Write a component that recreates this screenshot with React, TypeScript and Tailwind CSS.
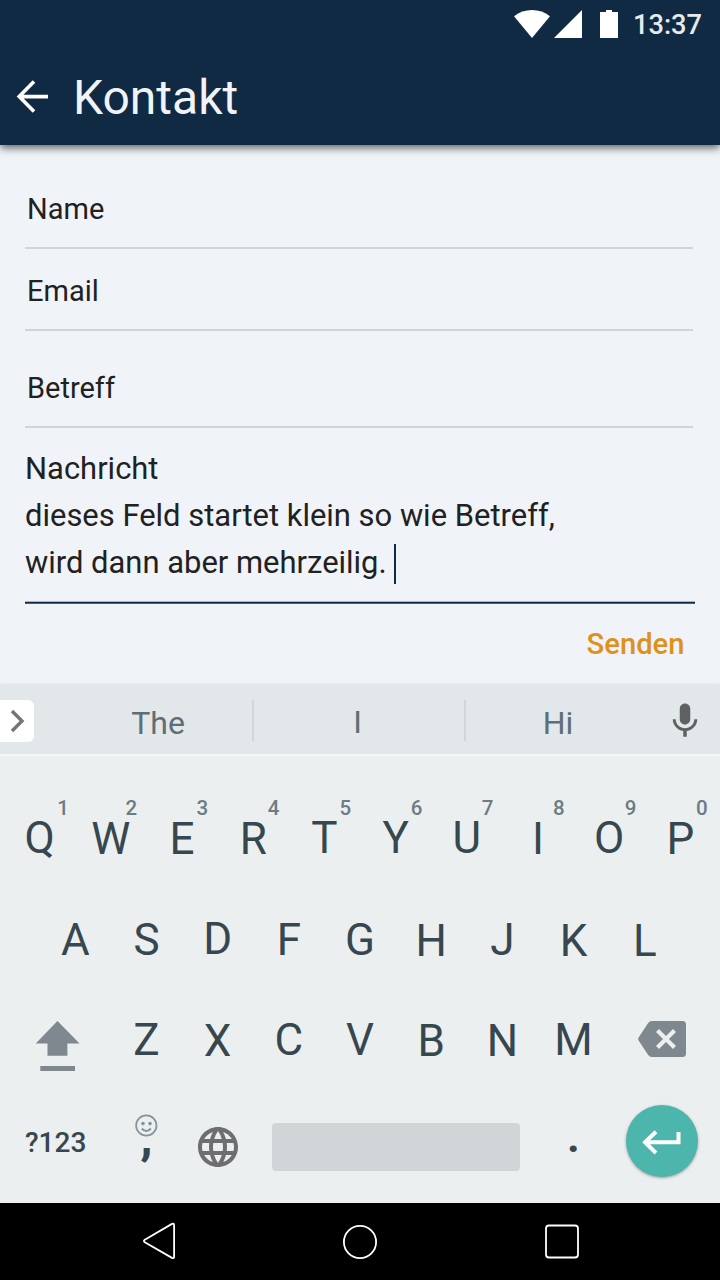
import React from "react";

type Key = { label: string; hint?: string; shift?: string; hintPlace?: string };

const row1: Key[] = [
  { label: "Q", hint: "1", shift: "pb-[2px]", hintPlace: "left-[47px]" },
  { label: "W", hint: "2", hintPlace: "left-[44px]" },
  { label: "E", hint: "3", hintPlace: "left-[44px]" },
  { label: "R", hint: "4", hintPlace: "left-[44px]" },
  { label: "T", hint: "5", shift: "pb-[2px]" },
  { label: "Y", hint: "6", shift: "pb-[2px]" },
  { label: "U", hint: "7", shift: "pb-[2px]" },
  { label: "I", hint: "8" },
  { label: "O", hint: "9", shift: "pb-[2px]", hintPlace: "left-[45px]" },
  { label: "P", hint: "0", hintPlace: "left-[45px]" },
];

const row2: Key[] = [
  { label: "A" },
  { label: "S" },
  { label: "D", shift: "pb-[2px]" },
  { label: "F" },
  { label: "G" },
  { label: "H", shift: "pt-[2px]" },
  { label: "J" },
  { label: "K", shift: "pt-[2px]" },
  { label: "L", shift: "pt-[2px]" },
];

const row3: Key[] = [
  { label: "Z" },
  { label: "X", shift: "pt-[2px]" },
  { label: "C" },
  { label: "V" },
  { label: "B", shift: "pt-[2px]" },
  { label: "N", shift: "pt-[2px]" },
  { label: "M" },
];

function KeyCap({ label, hint, shift = "", hintPlace = "left-[44.5px]" }: Key) {
  return (
    <div className="relative flex h-full w-[71.2px] items-center justify-center">
      <span className={`text-[44px] leading-[44px] ${shift}`}>{label}</span>
      {hint && (
        <span
          className={`absolute top-[11px] w-6 text-center text-[20.5px] font-medium leading-[18px] text-[#6b7c84] ${hintPlace}`}
        >
          {hint}
        </span>
      )}
    </div>
  );
}

function StatusBar() {
  return (
    <div className="flex h-[48px] items-start justify-end pr-[18px]">
      <svg className="mt-2 h-8 w-[106px]" viewBox="512 8 106 32" fill="#fff">
        <path d="M532 38 514 16.2Q522 10 532 10T550 16.2Z" />
        <path d="M554 38 582 10V38Z" />
        <path d="M600 12H606V10H612V12H618V38H600Z" />
      </svg>
      <span className="ml-[15px] mt-[9px] text-[27.2px] font-medium leading-8 text-[#e7eaec]">13:37</span>
    </div>
  );
}

function AppBar() {
  return (
    <div className="flex h-[97px] items-center">
      <svg className="-mt-px ml-4 h-9 w-9" viewBox="16 78 36 36" fill="none" stroke="#fff" strokeWidth="3.6">
        <path d="M34 81.6 19.200 96.600 34 111.600M19.200 96.600H48" />
      </svg>
      <h1 className="ml-[21px] mt-[2px] text-[48px] leading-[56px] text-[#f0f4f8]">Kontakt</h1>
    </div>
  );
}

function Field({ label, className }: { label: string; className: string }) {
  return (
    <div className={`h-[60px] w-[668px] border-b-2 border-[#d0d5db] pl-0.5 text-[29px] leading-10 ${className}`}>
      {label}
    </div>
  );
}

function ContactForm() {
  return (
    <main className="h-[540px] pl-[25px] pt-[44px] text-[#212121]">
      <Field label="Name" className="" />
      <Field label="Email" className="mt-[22px]" />
      <Field label="Betreff" className="mt-[37px]" />
      <div className="mt-[17px] h-[156px] whitespace-nowrap text-[30.95px] leading-[47px]">
        <div>Nachricht</div>
        <div>dieses Feld startet klein so wie Betreff,</div>
        <div className="flex">
          wird dann aber mehrzeilig.
          <span className="ml-[7.5px] mt-[5px] h-10 w-0.5 bg-[#102a43]" />
        </div>
      </div>
      <div className="-ml-[0.5px] h-[3px] w-[670px] border-y border-b-[#4a5f74] border-t-[#a9b5c1] bg-[#102a43]" />
      <div className="flex h-20 justify-end pr-[35.5px] pt-5">
        <button className="h-10 text-[29.2px] font-medium leading-10 text-[#de911d]">Senden</button>
      </div>
    </main>
  );
}

function Suggestions() {
  return (
    <div className="flex h-[71px] items-start border-b-2 border-[#f4f6f7] bg-[#e2e7ea] pt-[15px] text-[32px] leading-[46px] text-[#5f6e76] shadow-[0_-1px_2px_rgba(0,0,0,0.08)]">
      <div className="flex h-[42px] w-[34px] items-center rounded-r-[6px] bg-white">
        <svg className="h-6 w-[34px]" viewBox="0 0 34 24" fill="none" stroke="#757575" strokeWidth="3.4">
          <path d="M12 2 22 12 12 22" />
        </svg>
      </div>
      <div className="ml-[30px] w-[188px] text-center">The</div>
      <div className="h-[41px] w-0.5 bg-[#d1d6d9]" />
      <div className="-mt-px w-[210px] pr-[3px] text-center">I</div>
      <div className="h-[41px] w-0.5 bg-[#d1d6d9]" />
      <div className="w-[185px] pr-px text-center">Hi</div>
      <svg className="ml-[13px] h-[42px] w-[42px]" viewBox="0 0 24 24" fill="#5f6062">
        <path d="M12 14c1.66 0 2.99-1.34 2.99-3L15 5c0-1.66-1.34-3-3-3S9 3.34 9 5v6c0 1.66 1.34 3 3 3zm5.3-3c0 3-2.54 5.1-5.3 5.1S6.7 14 6.7 11H5c0 3.41 2.72 6.23 6 6.72V21h2v-3.28c3.28-.48 6-3.3 6-6.72h-1.7z" />
      </svg>
    </div>
  );
}

function Keyboard() {
  return (
    <section className="h-[447px] bg-[#ebefef] pt-8 text-[#37474f]">
      <div className="flex h-[101px] justify-center">
        {row1.map((k) => (
          <KeyCap key={k.label} {...k} />
        ))}
      </div>
      <div className="flex h-[101px] justify-center">
        {row2.map((k) => (
          <KeyCap key={k.label} {...k} />
        ))}
      </div>
      <div className="flex h-[100px] items-center">
        <svg className="ml-[35px] mt-[12px] h-[52px] w-[46px]" viewBox="35 1020 46 52" fill="#80888f">
          <path d="M57.5 1021 79.5 1043.6H67.4V1055.7H47.5V1043.6H35.7Z" />
          <path d="M40.3 1066H75V1071H40.3Z" />
        </svg>
        <div className="ml-[29.8px] flex h-full">
          {row3.map((k) => (
            <KeyCap key={k.label} {...k} />
          ))}
        </div>
        <svg className="-mt-[2px] ml-auto mr-[33px] h-[38px] w-[50px]" viewBox="637 1020 50 38">
          <path
            d="M651 1021H682.5Q686 1021 686 1024.5V1053.5Q686 1057 682.5 1057H652Q649.5 1057 648 1054.7L638.6 1040.5Q637.6 1039 638.6 1037.5L648 1023.3Q649.5 1021 652 1021Z"
            fill="#80888f"
          />
          <path d="M657.5 1030.5 674.5 1047.5M674.5 1030.5 657.5 1047.5" stroke="#ebefef" strokeWidth="4.2" />
        </svg>
      </div>
      <div className="flex h-[102px] items-center">
        <span className="mt-[3px] w-[110px] pl-[25px] text-[28px] font-medium leading-9">?123</span>
        <div className="flex h-full w-[72px] flex-col items-center pt-6">
          <svg className="h-6 w-6 shrink-0" viewBox="0 0 24 24" fill="none" stroke="#86949a" strokeWidth="1.7">
            <circle cx="12.3" cy="11.5" r="10.2" />
            <path d="M7.8 14.5Q12.3 19.5 16.8 14.5" strokeWidth="2" />
            <circle cx="9" cy="9.6" r="1.8" fill="#86949a" stroke="none" />
            <circle cx="16" cy="9.6" r="1.8" fill="#86949a" stroke="none" />
          </svg>
          <span className="-mt-[26px] pl-px text-[46px] font-black leading-[52px]">,</span>
        </div>
        <div className="flex w-[72px] justify-center pt-3">
          <svg className="h-12 w-12" viewBox="0 0 24 24" fill="#6e6e70">
            <path d="M11.99 2C6.47 2 2 6.48 2 12s4.47 10 9.99 10C17.52 22 22 17.52 22 12S17.52 2 11.99 2zm6.93 6h-2.95c-.32-1.25-.78-2.45-1.38-3.56 1.84.63 3.37 1.91 4.33 3.56zM12 4.04c.83 1.2 1.48 2.53 1.91 3.96h-3.82c.43-1.43 1.08-2.76 1.91-3.96zM4.26 14C4.1 13.36 4 12.69 4 12s.1-1.36.26-2h3.38c-.08.66-.14 1.32-.14 2 0 .68.06 1.34.14 2H4.26zm.82 2h2.95c.32 1.25.78 2.45 1.38 3.56-1.84-.63-3.37-1.9-4.33-3.56zm2.95-8H5.08c.96-1.66 2.49-2.93 4.33-3.56C8.81 5.55 8.35 6.75 8.03 8zM12 19.96c-.83-1.2-1.48-2.53-1.91-3.96h3.82c-.43 1.43-1.08 2.76-1.91 3.96zM14.34 14H9.66c-.09-.66-.16-1.32-.16-2 0-.68.07-1.35.16-2h4.68c.09.65.16 1.32.16 2 0 .68-.07 1.34-.16 2zm.25 5.56c.6-1.11 1.06-2.31 1.38-3.56h2.95c-.96 1.65-2.49 2.93-4.33 3.56zM16.36 14c.08-.66.14-1.32.14-2 0-.68-.06-1.34-.14-2h3.38c.16.64.26 1.31.26 2s-.1 1.36-.26 2h-3.38z" />
          </svg>
        </div>
        <div className="ml-[18px] mt-3 h-12 w-[248px] rounded-[4px] bg-[#d1d5d8]" />
        <span className="w-[106px] pb-[9px] pl-px text-center text-[44px] font-bold leading-[52px]">.</span>
        <button className="flex h-[72px] w-[72px] items-center justify-center rounded-full bg-[#4db6ac] shadow-[0_1px_3px_rgba(0,0,0,0.35)]">
          <svg className="h-7 w-10" viewBox="642 1127 40 28" fill="none" stroke="#fff" strokeWidth="4">
            <path d="M656 1131.8 645 1142.3 656 1153M645 1142.3H678.5V1132" />
          </svg>
        </button>
      </div>
    </section>
  );
}

function NavBar() {
  return (
    <nav className="flex h-[77px] items-start bg-black pl-[141px] pt-[18px]">
      <svg className="h-10 w-9" viewBox="141 1221 36 40" fill="none" stroke="#fff" strokeWidth="1.8" strokeLinejoin="round">
        <path d="M172 1223.9Q174.1 1223 174.1 1225.2V1256.5Q174.1 1258.9 172 1257.9L144.8 1242.3Q143 1241 144.8 1239.7Z" />
      </svg>
      <svg className="ml-[165px] h-10 w-9" viewBox="342 1221 36 40" fill="none" stroke="#fff" strokeWidth="1.8">
        <circle cx="360" cy="1242" r="16.1" />
      </svg>
      <svg className="ml-[166px] h-10 w-9" viewBox="544 1221 36 40" fill="none" stroke="#fff" strokeWidth="1.8">
        <rect x="546" y="1225.5" width="32" height="32" rx="3" />
      </svg>
    </nav>
  );
}

export default function App() {
  return (
    <div className="h-[1280px] w-[720px] overflow-hidden bg-[#f0f4f8] font-[Roboto,sans-serif]">
      <header className="relative h-[145px] bg-[#102a43] shadow-[0_3px_8px_rgba(0,0,0,0.6)]">
        <StatusBar />
        <AppBar />
      </header>
      <ContactForm />
      <Suggestions />
      <Keyboard />
      <NavBar />
    </div>
  );
}
